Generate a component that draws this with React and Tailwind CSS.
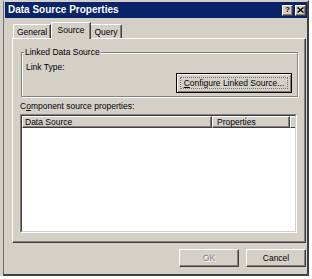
export default function App() {
  return (
    <div className="w-[312px] h-[279px] bg-white font-['Liberation_Sans',Arial,sans-serif] text-[8.5px] leading-[10px] text-black overflow-hidden">
      <div className="flex">
        <div className="w-[3px] h-[276px] bg-[#d4d0c8]" />
        <div className="w-[306px] h-[276px] bg-[#d4d0c8] border-l border-l-[#6e6e6e] border-r-2 border-r-[#404040] border-b-2 border-b-[#404040] border-t-2 border-t-[#d4d0c8] flex flex-col">
          {/* Title bar */}
          <div className="ml-[1px] h-[16px] shrink-0 bg-[#0a246a] flex items-center justify-between pl-[3px] pr-[1px]">
            <span className="text-white font-bold text-[10px] leading-[12px]">Data Source Properties</span>
            <div className="flex gap-[2px]">
              <div className="w-[11px] h-[11px] bg-[#d4d0c8] border-t border-l border-t-white border-l-white border-r border-b border-r-[#404040] border-b-[#404040] shadow-[inset_-1px_-1px_0_#808080] flex items-center justify-center">
                <span className="font-bold text-[8px] leading-[8px] text-black">?</span>
              </div>
              <div className="w-[11px] h-[11px] bg-[#d4d0c8] border-t border-l border-t-white border-l-white border-r border-b border-r-[#404040] border-b-[#404040] shadow-[inset_-1px_-1px_0_#808080] flex items-center justify-center">
                <svg width="7" height="6" viewBox="0 0 7 6">
                  <path d="M0.5 0.5 L6.5 5.5 M6.5 0.5 L0.5 5.5" stroke="#000" strokeWidth="1.5" fill="none" />
                </svg>
              </div>
            </div>
          </div>

          {/* Body */}
          <div className="flex flex-col pl-[8px] pr-[1px]">
            {/* Tabs */}
            <div className="h-[20px] flex items-end pl-[1px]">
              <div className="w-[38px] h-[14px] border-t border-l border-t-white border-l-white border-r border-r-[#404040] shadow-[inset_-1px_0_0_#808080] rounded-tl-[2px] flex items-center justify-center">
                General
              </div>
              <div className="relative z-10 -mb-[1px] w-[40px] h-[17px] bg-[#d4d0c8] border-t border-l border-t-white border-l-white border-r border-r-[#404040] shadow-[inset_-1px_0_0_#808080] rounded-tl-[2px] flex items-center justify-center pb-[2px]">
                Source
              </div>
              <div className="w-[31px] h-[14px] border-t border-t-white border-r border-r-[#404040] shadow-[inset_-1px_0_0_#808080] rounded-tr-[2px] flex items-center justify-center">
                Query
              </div>
            </div>

            {/* Panel */}
            <div className="h-[205px] flex flex-col border-t border-l border-t-white border-l-white border-r border-b border-r-[#404040] border-b-[#404040] shadow-[inset_-1px_-1px_0_#808080]">
              {/* Group box */}
              <div className="relative mt-[13px] ml-[8px] w-[277px] h-[45px] border border-[#808080] shadow-[inset_1px_1px_0_#fff,1px_1px_0_#fff] pt-[9px] pl-[4px] pr-[5px]">
                <span className="absolute left-[2px] top-[-6px] px-[1px] bg-[#d4d0c8] leading-[10px]">Linked Data Source</span>
                <div className="h-[10px]">Link Type:</div>
                <div className="mt-[1px] flex justify-end">
                  <div className="w-[116px] h-[20px] border border-black shadow-[inset_1px_1px_0_#fff,inset_-1px_-1px_0_#808080] flex p-[3px]">
                    <div className="flex-1 border border-dotted border-[#777] flex items-center justify-center">
                      <span><span className="underline">C</span>onfigure Linked Source...</span>
                    </div>
                  </div>
                </div>
              </div>

              <div className="mt-[4px] ml-[7px] h-[10px]">
                C<span className="underline">o</span>mponent source properties:
              </div>

              {/* List view */}
              <div className="mt-[3px] ml-[7px] w-[277px] h-[119px] border-t border-l border-t-[#808080] border-l-[#808080] border-b border-r border-b-white border-r-white">
                <div className="h-full bg-white border-t border-l border-t-[#404040] border-l-[#404040] border-b border-r border-b-[#d4d0c8] border-r-[#d4d0c8] flex flex-col">
                  <div className="h-[12px] flex">
                    <div className="w-[190px] bg-[#d4d0c8] border-t border-l border-t-white border-l-white border-r border-b border-r-[#404040] border-b-[#404040] shadow-[inset_-1px_-1px_0_#808080] pl-[2px] flex items-center">
                      Data Source
                    </div>
                    <div className="w-[78px] bg-[#d4d0c8] border-t border-l border-t-white border-l-white border-r border-b border-r-[#404040] border-b-[#404040] shadow-[inset_-1px_-1px_0_#808080] pl-[4px] flex items-center">
                      Properties
                    </div>
                    <div className="flex-1 bg-[#d4d0c8] border-t border-l border-t-white border-l-white border-b border-b-[#404040]" />
                  </div>
                </div>
              </div>
            </div>

            {/* Buttons */}
            <div className="mt-[6px] flex justify-end gap-[7px]">
              <div className="w-[60px] h-[18px] border-t border-l border-t-white border-l-white border-r border-b border-r-[#404040] border-b-[#404040] shadow-[inset_-1px_-1px_0_#808080] flex items-center justify-center text-[#808080] [text-shadow:1px_1px_0_#fff]">
                OK
              </div>
              <div className="w-[60px] h-[18px] border-t border-l border-t-white border-l-white border-r border-b border-r-[#404040] border-b-[#404040] shadow-[inset_-1px_-1px_0_#808080] flex items-center justify-center">
                Cancel
              </div>
            </div>
          </div>
        </div>
      </div>
    </div>
  );
}
